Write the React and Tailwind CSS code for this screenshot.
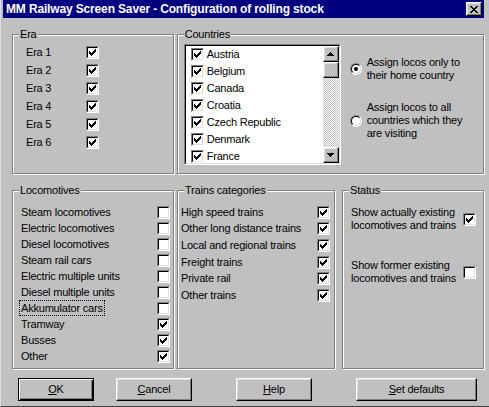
import React from 'react';

const eras = ['Era 1', 'Era 2', 'Era 3', 'Era 4', 'Era 5', 'Era 6'];
const countries = ['Austria', 'Belgium', 'Canada', 'Croatia', 'Czech Republic', 'Denmark', 'France'];
const locos = [
  ['Steam locomotives', false],
  ['Electric locomotives', false],
  ['Diesel locomotives', false],
  ['Steam rail cars', false],
  ['Electric multiple units', false],
  ['Diesel multiple units', false],
  ['Akkumulator cars', false],
  ['Tramway', true],
  ['Busses', true],
  ['Other', true],
];
const trains = [
  'High speed trains',
  'Other long distance trains',
  'Local and regional trains',
  'Freight trains',
  'Private rail',
  'Other trains',
];

// 7x7 pixel check mark, the classic win95 one
const Check = () => (
  <svg width="7" height="7" viewBox="0 0 7 7" shapeRendering="crispEdges" className="block">
    <path d="M6 0h1v1h-1zM5 1h2v1h-2zM0 2h1v1h-1zM4 2h3v1h-3zM0 3h2v1h-2zM3 3h3v1h-3zM0 4h5v1h-5zM1 5h3v1h-3zM2 6h1v1h-1z" fill="#000" />
  </svg>
);

const Box = ({ on }) => (
  <span className="flex w-[13px] h-[13px] shrink-0 border border-t-[#808080] border-l-[#808080] border-b-white border-r-white">
    <span className="flex flex-1 items-center justify-center bg-white border border-t-black border-l-black border-b-[#dfdfdf] border-r-[#dfdfdf]">
      {on && <Check />}
    </span>
  </span>
);

const Radio = ({ on }) => (
  <span className="flex w-[12px] h-[12px] shrink-0 rounded-full border border-t-[#808080] border-l-[#808080] border-b-white border-r-white">
    <span className="flex flex-1 items-center justify-center rounded-full bg-white border border-t-black border-l-black border-b-[#dfdfdf] border-r-[#dfdfdf]">
      {on && <span className="w-[4px] h-[4px] rounded-full bg-black" />}
    </span>
  </span>
);

const Group = ({ title, className, children }) => (
  <div className={`relative border border-[#808080] shadow-[inset_1px_1px_0_#fff,1px_1px_0_#fff] ${className}`}>
    <span className="absolute -top-[7px] left-[6px] bg-[#c0c0c0] px-px leading-[13px]">{title}</span>
    {children}
  </div>
);

const Arrow = ({ down }) => (
  <svg width="7" height="4" viewBox="0 0 7 4" shapeRendering="crispEdges" className="block">
    <path d={down ? 'M0 0h7v1h-7zM1 1h5v1h-5zM2 2h3v1h-3zM3 3h1v1h-1z' : 'M3 0h1v1h-1zM2 1h3v1h-3zM1 2h5v1h-5zM0 3h7v1h-7z'} fill="#000" />
  </svg>
);

const raised = 'border border-t-white border-l-white border-b-black border-r-black shadow-[inset_-1px_-1px_0_#808080,inset_1px_1px_0_#dfdfdf] bg-[#c0c0c0]';

const ScrollBtn = ({ down }) => (
  <div className={`flex h-[16px] items-center justify-center ${raised}`}>
    <Arrow down={down} />
  </div>
);

const Button = ({ children, className }) => (
  <button className={`flex h-[23px] items-center justify-center ${className}`}>{children}</button>
);

export default function App() {
  return (
    <div className="w-[489px] h-[407px] overflow-hidden bg-[#c0c0c0] border-l border-l-[#dfdfdf] border-b border-b-[#404040] pl-[2px] pr-[5px] text-[11px] leading-[13px] tracking-[-0.2px] text-black font-['Liberation_Sans',Arial,sans-serif]">
      {/* title bar */}
      <div className="flex h-[18px] items-center justify-between bg-[#000080] pl-[3px] pr-[2px]">
        <span className="text-[12px] font-bold text-white tracking-[-0.15px]">MM Railway Screen Saver - Configuration of rolling stock</span>
        <span className={`flex w-[16px] h-[14px] items-center justify-center ${raised}`}>
          <svg width="8" height="7" viewBox="0 0 8 7" shapeRendering="crispEdges" className="block">
            <path d="M0 0h2v1h-2zM6 0h2v1h-2zM1 1h2v1h-2zM5 1h2v1h-2zM2 2h4v1h-4zM3 3h2v1h-2zM2 4h4v1h-4zM1 5h2v1h-2zM5 5h2v1h-2zM0 6h2v1h-2zM6 6h2v1h-2z" fill="#000" />
          </svg>
        </span>
      </div>

      {/* upper row */}
      <div className="flex gap-[3px] mt-[16px] pl-[9px]">
        <Group title="Era" className="w-[162px] h-[140px] pt-[8px] pl-[13px]">
          {eras.map((e) => (
            <div key={e} className="flex h-[18px] items-center">
              <span className="w-[60px]">{e}</span>
              <Box on />
            </div>
          ))}
        </Group>

        <Group title="Countries" className="flex w-[308px] h-[140px] pt-[9px] pl-[6px]">
          <div className="w-[157px] h-[121px] border border-t-[#808080] border-l-[#808080] border-b-white border-r-white">
            <div className="flex h-full bg-white border border-t-black border-l-black border-b-[#dfdfdf] border-r-[#dfdfdf]">
              <div className="flex-1 pl-[5px]">
                {countries.map((c) => (
                  <div key={c} className="flex h-[17px] items-center gap-[3px]">
                    <Box on />
                    <span>{c}</span>
                  </div>
                ))}
              </div>
              <div className="flex w-[16px] flex-col">
                <ScrollBtn />
                <div className={`h-[16px] ${raised}`} />
                <div className="flex-1 bg-[repeating-conic-gradient(#c0c0c0_0%_25%,#ffffff_0%_50%)] bg-[length:2px_2px]" />
                <ScrollBtn down />
              </div>
            </div>
          </div>

          <div className="flex flex-col gap-[19px] pt-[12px] pl-[9px]">
            <div className="flex items-center gap-[5px]">
              <Radio on />
              <span>Assign locos only to<br />their home country</span>
            </div>
            <div className="flex items-center gap-[5px]">
              <Radio />
              <span>Assign locos to all<br />countries which they<br />are visiting</span>
            </div>
          </div>
        </Group>
      </div>

      {/* lower row */}
      <div className="flex mt-[16px] pl-[9px]">
        <Group title="Locomotives" className="w-[162px] h-[179px] pt-[13px] pl-[8px]">
          {locos.map(([name, on]) => (
            <div key={name} className="flex h-[16.1px] items-center">
              <span className="w-[136px]">
                {name === 'Akkumulator cars' ? (
                  <span className="outline-1 outline-dotted outline-black px-px -ml-px py-px">{name}</span>
                ) : (
                  name
                )}
              </span>
              <Box on={on} />
            </div>
          ))}
        </Group>

        <Group title="Trains categories" className="ml-[3px] w-[158px] h-[179px] pt-[13px] pl-[3px]">
          {trains.map((t) => (
            <div key={t} className="flex h-[16.6px] items-center">
              <span className="w-[136px]">{t}</span>
              <Box on />
            </div>
          ))}
        </Group>

        <Group title="Status" className="ml-[7px] w-[142px] h-[179px] pt-[15px] pl-[8px]">
          <div className="flex items-center">
            <span className="w-[112px]">Show actually existing<br />locomotives and trains</span>
            <Box on />
          </div>
          <div className="flex items-center mt-[27px]">
            <span className="w-[112px]">Show former existing<br />locomotives and trains</span>
            <Box />
          </div>
        </Group>
      </div>

      {/* buttons */}
      <div className="flex mt-[9px] pl-[15px]">
        <Button className="w-[76px] border border-black bg-[#c0c0c0] shadow-[inset_1px_1px_0_#fff,inset_-1px_-1px_0_#000,inset_-2px_-2px_0_#808080]">
          <span><u>O</u>K</span>
        </Button>
        <Button className={`ml-[22px] w-[76px] ${raised}`}>
          <span><u>C</u>ancel</span>
        </Button>
        <Button className={`ml-[44px] w-[76px] ${raised}`}>
          <span><u>H</u>elp</span>
        </Button>
        <Button className={`ml-[44px] w-[121px] ${raised}`}>
          <span><u>S</u>et defaults</span>
        </Button>
      </div>
    </div>
  );
}
